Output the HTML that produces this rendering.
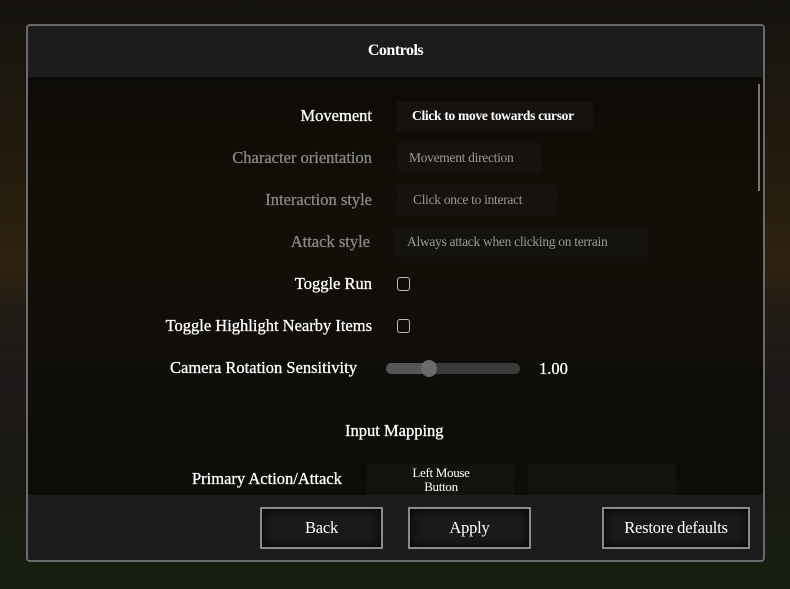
<!DOCTYPE html>
<html><head><style>
*{margin:0;padding:0;box-sizing:border-box}
body{width:790px;height:589px;overflow:hidden;position:relative;font-family:"Liberation Serif",serif;
background:linear-gradient(180deg,#15130f 0%,#221a0e 25%,#2e220f 45%,#231c16 52%,#1e1918 65%,#181812 80%,#172010 100%);}
.panel{position:absolute;left:26px;top:24px;width:739px;height:538px;border:2px solid #6a6a6a;border-radius:4px;background:rgba(10,8,6,0.72);overflow:hidden}
.hdr{position:absolute;left:0;top:0;right:0;height:51px;background:#1c1c1c;color:#fff;font-weight:bold;font-size:16px;text-align:center;line-height:50px;letter-spacing:-0.5px}
.ftr{position:absolute;left:0;bottom:0;right:0;height:65px;background:#1c1c1c}
.t{position:absolute;font-size:16.5px;white-space:nowrap;letter-spacing:0;-webkit-text-stroke:0.3px currentColor}
.r{text-align:right}
.box{position:absolute;background:rgba(22,20,18,0.8);font-size:13.5px;white-space:nowrap;letter-spacing:-0.3px;padding-left:12px;line-height:30px;height:30px}
.cb{position:absolute;width:13px;height:14px;border:1.5px solid #bbb;border-radius:3px}
.btn{position:absolute;top:481px;height:42px;border:2px solid #8a8a8a;background:#1a1a1a;box-shadow:inset 0 0 10px #000;color:#fff;font-size:16.5px;text-align:center;line-height:38px;letter-spacing:-0.2px}
</style></head><body>
<div class="panel">
<div class="hdr">Controls</div>
<div style="position:absolute;left:730px;top:58px;width:2px;height:107px;background:#777"></div>
<div class="t r" style="right:391px;top:80px;color:#fff">Movement</div>
<div class="box" style="left:369px;top:75px;width:196px;color:#fff;font-weight:bold;padding-left:15px">Click to move towards cursor</div>
<div class="t r" style="right:391px;top:122px;color:#888">Character orientation</div>
<div class="box" style="left:369px;top:117px;width:144px;color:#999;padding-left:12px">Movement direction</div>
<div class="t r" style="right:391px;top:164px;color:#888">Interaction style</div>
<div class="box" style="left:369px;top:159px;width:160px;color:#999;padding-left:16px">Click once to interact</div>
<div class="t r" style="right:393px;top:206px;color:#888">Attack style</div>
<div class="box" style="left:366px;top:201px;width:253px;color:#999;padding-left:13px">Always attack when clicking on terrain</div>
<div class="t r" style="right:391px;top:248px;color:#fff">Toggle Run</div>
<div class="cb" style="left:369px;top:251px"></div>
<div class="t r" style="right:391px;top:290px;color:#fff">Toggle Highlight Nearby Items</div>
<div class="cb" style="left:369px;top:293px"></div>
<div class="t" style="left:142px;top:332px;color:#fff">Camera Rotation Sensitivity</div>
<div style="position:absolute;left:358px;top:337px;width:134px;height:11px;border-radius:6px;background:#3a3a3a"></div>
<div style="position:absolute;left:358px;top:337px;width:42px;height:11px;border-radius:6px;background:#555"></div>
<div style="position:absolute;left:393px;top:334px;width:16px;height:17px;border-radius:50%;background:#6a6a6a"></div>
<div class="t" style="left:511px;top:333px;color:#fff">1.00</div>
<div class="t" style="left:317px;top:395px;color:#fff">Input Mapping</div>
<div class="t" style="left:164px;top:443px;color:#fff">Primary Action/Attack</div>
<div style="position:absolute;left:339px;top:438px;width:148px;height:33px;background:rgba(22,20,18,0.8);color:#fff;font-size:13px;text-align:center;line-height:14px;padding-top:2px;letter-spacing:-0.3px">Left Mouse<br>Button</div>
<div style="position:absolute;left:500px;top:438px;width:148px;height:33px;background:rgba(22,20,18,0.8)"></div>
<div class="ftr"></div>
<div class="btn" style="left:232px;width:123px">Back</div>
<div class="btn" style="left:380px;width:123px">Apply</div>
<div class="btn" style="left:574px;width:148px">Restore defaults</div>
</div>
</body></html>
